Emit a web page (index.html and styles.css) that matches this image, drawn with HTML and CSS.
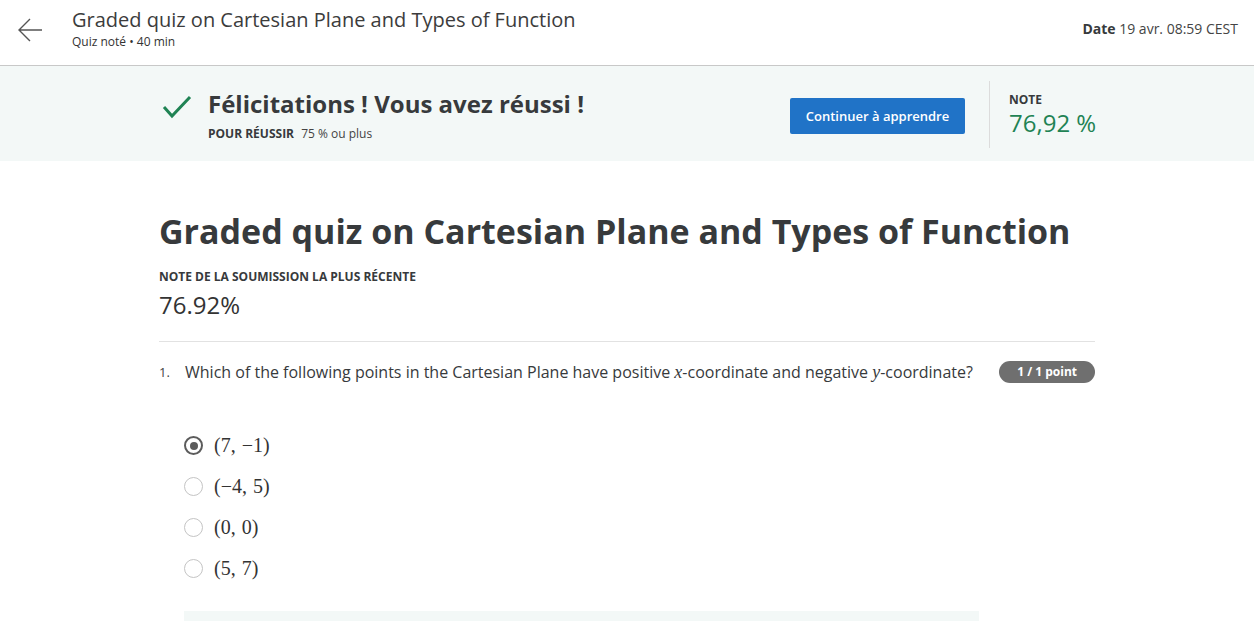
FILE: index.html
```html
<!DOCTYPE html>
<html lang="fr">
<head>
<meta charset="utf-8">
<title>Graded quiz</title>
<link rel="stylesheet" href="styles.css">
</head>
<body>
<header class="topbar">
  <div class="back">
    <svg width="26" height="26" viewBox="0 0 26 26"><path d="M25 13H2M13 2L2 13l11 11" fill="none" stroke="#555" stroke-width="1.4"/></svg>
  </div>
  <div class="top-titles">
    <div class="top-title">Graded quiz on Cartesian Plane and Types of Function</div>
    <div class="top-sub">Quiz noté • 40 min</div>
  </div>
  <div class="top-date"><b>Date</b> 19 avr. 08:59 CEST</div>
</header>
<section class="banner">
  <div class="banner-inner">
    <div class="check">
      <svg width="30" height="24" viewBox="0 0 30 24"><path d="M2 12l8 9L28 2" fill="none" stroke="#1f8354" stroke-width="3"/></svg>
    </div>
    <div class="banner-text">
      <div class="congrats">Félicitations ! Vous avez réussi !</div>
      <div class="pass"><b>POUR RÉUSSIR</b> 75 % ou plus</div>
    </div>
    <button class="btn">Continuer à apprendre</button>
    <div class="divider"></div>
    <div class="grade">
      <div class="grade-label">NOTE</div>
      <div class="grade-value">76,92 %</div>
    </div>
  </div>
</section>
<main class="main">
  <h1 class="title">Graded quiz on Cartesian Plane and Types of Function</h1>
  <div class="sub-label">NOTE DE LA SOUMISSION LA PLUS RÉCENTE</div>
  <div class="sub-value">76.92%</div>
  <hr class="rule">
  <div class="question">
    <span class="qnum">1.</span>
    <span class="qtext">Which of the following points in the Cartesian Plane have positive <i class="m">x</i>-coordinate and negative <i class="m">y</i>-coordinate?</span>
    <span class="badge">1 / 1 point</span>
  </div>
  <ul class="options">
    <li class="opt"><span class="radio on"></span><span class="math">(7, −1)</span></li>
    <li class="opt"><span class="radio"></span><span class="math">(−4, 5)</span></li>
    <li class="opt"><span class="radio"></span><span class="math">(0, 0)</span></li>
    <li class="opt"><span class="radio"></span><span class="math">(5, 7)</span></li>
  </ul>
  <div class="feedback"></div>
</main>
</body>
</html>
```
FILE: styles.css
```css
* { box-sizing: border-box; }
html, body { margin: 0; padding: 0; }
body {
  font-family: "Open Sans", "Liberation Sans", sans-serif;
  color: #373a3c;
  background: #fff;
  overflow: hidden;
  height: 621px;
}
.topbar {
  height: 66px;
  display: flex;
  align-items: flex-start;
  border-bottom: 1px solid #c8c8c8;
  padding: 0 16px 0 17px;
}
.back {
  width: 55px;
  padding-top: 17px;
}
.back svg { display: block; }
.top-titles { flex: 1; padding-top: 6px; }
.top-title {
  font-size: 20px;
  line-height: 28px;
  color: #3c3c3c;
}
.top-sub {
  font-size: 12px;
  line-height: 16px;
  color: #333;
}
.top-date {
  font-size: 14px;
  padding-top: 19px;
  color: #444;
}
.top-date b { font-weight: 700; color: #373a3c; }
.banner {
  background: #f3f8f7;
  height: 95px;
}
.banner-inner {
  width: 936px;
  margin: 0 auto;
  display: flex;
  align-items: center;
  height: 100%;
  padding-left: 3px;
}
.check { width: 45px; align-self: flex-start; margin-top: 29px; }
.check svg { display: block; }
.banner-text { flex: 1; align-self: flex-start; padding-top: 21px; padding-left: 1px; }
.congrats {
  font-size: 24px;
  font-weight: 700;
  line-height: 34px;
  color: #373a3c;
}
.pass {
  font-size: 12px;
  margin-top: 4px;
  color: #444;
}
.pass b { margin-right: 4px; color: #373a3c; }
.btn {
  background: #2073c7;
  color: #fff;
  border: none;
  border-radius: 2px;
  font-family: inherit;
  font-size: 13px;
  font-weight: 600;
  width: 175px;
  height: 36px;
  margin-right: 24px;
  margin-top: 4px;
}
.divider {
  width: 1px;
  height: 67px;
  background: #dcdcdc;
  margin-right: 19px;
  margin-top: 1px;
}
.grade { width: 86px; white-space: nowrap; margin-top: 2px; }
.grade-label {
  font-size: 12px;
  font-weight: 700;
  line-height: 16px;
  color: #373a3c;
}
.grade-value {
  font-size: 24px;
  line-height: 30px;
  color: #1f8354;
}
.main {
  width: 936px;
  margin: 0 auto;
  padding-top: 47px;
}
.title {
  font-size: 34px;
  font-weight: 700;
  line-height: 46px;
  margin: 0;
  color: #373a3c;
  white-space: nowrap;
}
.sub-label {
  font-size: 12px;
  font-weight: 700;
  margin-top: 15px;
  line-height: 16px;
}
.sub-value {
  font-size: 24px;
  line-height: 32px;
  margin-top: 4px;
  color: #333;
}
.rule {
  border: none;
  border-top: 1px solid #e2e2e2;
  margin: 20px 0 0;
}
.question {
  display: flex;
  align-items: center;
  margin-top: 19px;
}
.qnum {
  font-size: 13px;
  width: 26px;
  color: #444;
}
.qtext {
  flex: 1;
  font-size: 16px;
  color: #373a3c;
}
.m {
  font-family: "Liberation Serif", "DejaVu Serif", serif;
  font-size: 18px;
}
.badge {
  background: #6f6f6f;
  color: #fff;
  font-size: 12px;
  font-weight: 700;
  border-radius: 11px;
  height: 22px;
  line-height: 22px;
  padding: 0 18px;
}
.options {
  list-style: none;
  margin: 42px 0 0 25px;
  padding: 0;
}
.opt {
  display: flex;
  align-items: center;
  height: 41px;
}
.radio {
  width: 19px;
  height: 19px;
  border-radius: 50%;
  border: 1.5px solid #c4c4c4;
  margin-right: 11px;
  position: relative;
}
.radio.on { border: 2px solid #5c5c5c; }
.radio.on::after {
  content: "";
  position: absolute;
  left: 3.5px;
  top: 3.5px;
  width: 8px;
  height: 8px;
  border-radius: 50%;
  background: #5c5c5c;
}
.math {
  font-family: "Liberation Serif", "DejaVu Serif", serif;
  font-size: 20px;
  color: #333;
  word-spacing: 1px;
}
.feedback {
  margin: 22px 0 0 25px;
  width: 795px;
  height: 40px;
  background: #f3f8f7;
}
```
